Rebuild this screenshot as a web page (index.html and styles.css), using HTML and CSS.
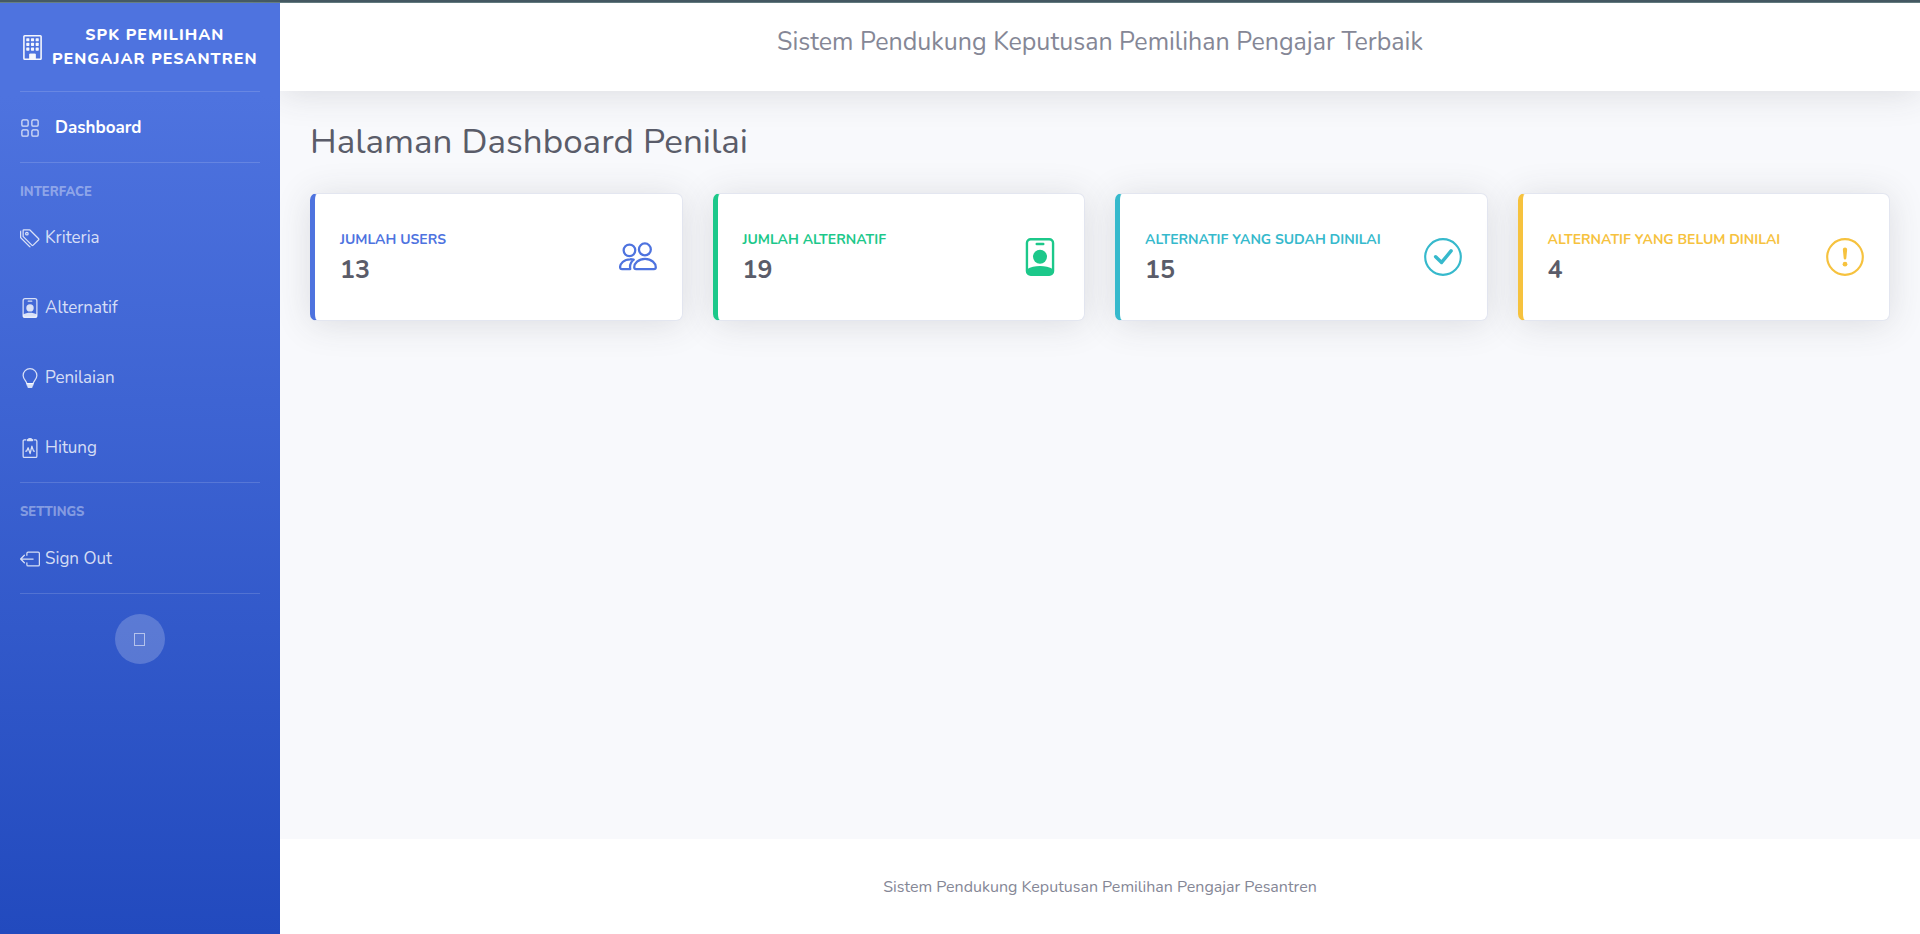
FILE: index.html
```
<!DOCTYPE html>
<html lang="id">
<head>
<meta charset="utf-8">
<title>Dashboard Penilai</title>
<link rel="stylesheet" href="styles.css">
</head>
<body>
<svg class="defs" width="0" height="0" aria-hidden="true">
  <symbol id="badge" viewBox="0 0 16 16">
    <rect x="2.5" y=".5" width="11" height="15" rx="1.6" fill="none" stroke="currentColor"/>
    <rect x="6.1" y="2" width="3.8" height="1" rx=".5"/>
    <circle cx="8" cy="7.9" r="2.95"/>
    <path d="M2.5 13.2C4 12.2 6 11.8 8 11.8s4 .4 5.5 1.4v.9a1.5 1.5 0 0 1-1.5 1.5H4a1.5 1.5 0 0 1-1.5-1.5z"/>
  </symbol>
</svg>
<div class="strip"></div>
<div class="app">
  <nav class="sidebar">
    <a class="brand">
      <svg class="brand-icon" viewBox="0 0 16 16" fill="currentColor"><path fill-rule="evenodd" d="M3 0h10a1 1 0 0 1 1 1v14a1 1 0 0 1-1 1H3a1 1 0 0 1-1-1V1a1 1 0 0 1 1-1zm0 1v14h3v-2.5a.5.5 0 0 1 .5-.5h3a.5.5 0 0 1 .5.5V15h3V1z"/><path d="M6 12h4v3.5H6z"/><g><rect x="4" y="2" width="2" height="2" rx=".4"/><rect x="7" y="2" width="2" height="2" rx=".4"/><rect x="10" y="2" width="2" height="2" rx=".4"/><rect x="4" y="5" width="2" height="2" rx=".4"/><rect x="7" y="5" width="2" height="2" rx=".4"/><rect x="10" y="5" width="2" height="2" rx=".4"/><rect x="4" y="8" width="2" height="2" rx=".4"/><rect x="7" y="8" width="2" height="2" rx=".4"/><rect x="10" y="8" width="2" height="2" rx=".4"/></g></svg>
      <span class="brand-text"><span>SPK PEMILIHAN</span><span>PENGAJAR PESANTREN</span></span>
    </a>
    <hr>
    <a class="nav-link active">
      <svg class="icon" viewBox="0 0 16 16" fill="none" stroke="currentColor"><rect x="1.5" y="1.5" width="5" height="5" rx="1"/><rect x="9.5" y="1.5" width="5" height="5" rx="1"/><rect x="1.5" y="9.5" width="5" height="5" rx="1"/><rect x="9.5" y="9.5" width="5" height="5" rx="1"/></svg>
      <span>Dashboard</span>
    </a>
    <hr>
    <div class="heading">INTERFACE</div>
    <a class="nav-link">
      <svg class="icon" viewBox="0 0 16 16" fill="currentColor"><path d="M3 2v4.586l7 7L14.586 9l-7-7H3zM2 2a1 1 0 0 1 1-1h4.586a1 1 0 0 1 .707.293l7 7a1 1 0 0 1 0 1.414l-4.586 4.586a1 1 0 0 1-1.414 0l-7-7A1 1 0 0 1 2 6.586V2z"/><path d="M5.5 5a.5.5 0 1 1 0-1 .5.5 0 0 1 0 1zm0 1a1.5 1.5 0 1 0 0-3 1.5 1.5 0 0 0 0 3zM1 7.086a1 1 0 0 0 .293.707L8.75 15.25l-.043.043a1 1 0 0 1-1.414 0l-7-7A1 1 0 0 1 0 7.586V3a1 1 0 0 1 1-1v5.086z"/></svg>
      <span>Kriteria</span>
    </a>
    <a class="nav-link">
      <svg class="icon" fill="currentColor"><use href="#badge"/></svg>
      <span>Alternatif</span>
    </a>
    <a class="nav-link">
      <svg class="icon" viewBox="0 0 16 16" fill="currentColor"><path fill="none" stroke="currentColor" d="M5.5 12.5C5.2 10.3 2.5 9 2.5 6a5.5 5.5 0 0 1 11 0c0 3-2.7 4.3-3 6.5z"/><path d="M5.2 12h5.6v1.5a.8.8 0 0 1-.5.7l-.3 1.2a.8.8 0 0 1-.8.6H6.800a.8.8 0 0 1-.8-.6l-.3-1.2a.8.8 0 0 1-.5-.7z"/></svg>
      <span>Penilaian</span>
    </a>
    <a class="nav-link">
      <svg class="icon" viewBox="0 0 16 16" fill="none" stroke="currentColor"><path d="M5 1.5H3.500a1 1 0 0 0-1 1v12a1 1 0 0 0 1 1h9a1 1 0 0 0 1-1v-12a1 1 0 0 0-1-1H11"/><path fill="currentColor" stroke="none" d="M5.500 1.100Q5.500.9 6.200.7 6.800 0 7.500 0h1q.7 0 1.300.7.700.2.700.4V2a.5.5 0 0 1-.5.5H6a.5.5 0 0 1-.5-.5z"/><path stroke-linecap="round" stroke-linejoin="round" d="M4.600 10.500h.7l1.200-2.700 1.600 4.700L9.500 6.500l1.300 4h.7"/></svg>
      <span>Hitung</span>
    </a>
    <hr>
    <div class="heading">SETTINGS</div>
    <a class="nav-link signout">
      <svg class="icon" viewBox="0 0 16 16" fill="none" stroke="currentColor" stroke-linecap="round" stroke-linejoin="round"><path d="M5.500 5V3.500a1 1 0 0 1 1-1h8a1 1 0 0 1 1 1v9a1 1 0 0 1-1 1h-8a1 1 0 0 1-1-1V11M3.500 5l-3 3 3 3M.5 8h10"/></svg>
      <span>Sign Out</span>
    </a>
    <hr>
    <button class="toggle" type="button" aria-label="Toggle sidebar"><span class="glyph"></span></button>
  </nav>
  <div class="content">
    <header class="topbar">Sistem Pendukung Keputusan Pemilihan Pengajar Terbaik</header>
    <main>
      <h1>Halaman Dashboard Penilai</h1>
      <div class="cards">
        <section class="card primary">
          <div class="stat"><div class="label">JUMLAH USERS</div><div class="value">13</div></div>
          <svg class="card-icon" viewBox="0 0 16 16" fill="none" stroke="currentColor" stroke-width=".95" stroke-linejoin="round"><circle cx="4.400" cy="5.200" r="2.450"/><circle cx="10.900" cy="4.800" r="2.500"/><path d="M7.200 13.100h7.500c.6 0 .8-.3.800-.8 0-1.500-1.700-3.500-4.550-3.500S6.400 10.800 6.400 12.300c0 .5.200.8.800.8zM6.200 9.100a6 6 0 0 0-1.500-.15C2 8.950.45 10.900.45 12.300c0 .5.200.8.800.8h3.500c-.3-1.500.2-3 1.450-4z"/></svg>
        </section>
        <section class="card success">
          <div class="stat"><div class="label">JUMLAH ALTERNATIF</div><div class="value">19</div></div>
          <svg class="card-icon" fill="currentColor"><use href="#badge"/></svg>
        </section>
        <section class="card info">
          <div class="stat"><div class="label">ALTERNATIF YANG SUDAH DINILAI</div><div class="value">15</div></div>
          <svg class="card-icon" viewBox="0 0 16 16" fill="none" stroke="currentColor"><circle cx="8" cy="8" r="7.500" stroke-width=".9"/><path stroke-width="1.450" stroke-linecap="round" stroke-linejoin="round" d="M4.900 7.900l2.500 2.400 4-4.850"/></svg>
        </section>
        <section class="card warning">
          <div class="stat"><div class="label">ALTERNATIF YANG BELUM DINILAI</div><div class="value">4</div></div>
          <svg class="card-icon" viewBox="0 0 16 16" fill="currentColor"><circle cx="8" cy="8" r="7.500" fill="none" stroke="currentColor" stroke-width=".9"/><circle cx="8" cy="11" r="1"/><path d="M7.100 4.995a.905.905 0 1 1 1.800 0l-.35 3.507a.552.552 0 0 1-1.100 0z"/></svg>
        </section>
      </div>
    </main>
    <footer>Sistem Pendukung Keputusan Pemilihan Pengajar Pesantren</footer>
  </div>
</div>
</body>
</html>
```
FILE: styles.css
```
* { box-sizing: border-box; }
body {
  margin: 0;
  height: 100vh;
  display: flex;
  flex-direction: column;
  overflow: hidden;
  font: 16px/24px Nunito, "Open Sans", "Noto Sans", sans-serif;
  color: #858796;
  background: #f8f9fc;
}
svg { display: block; flex: none; }
.defs { position: absolute; }
.strip { height: 3px; flex: none; background: #455a64; border-bottom: 1px solid #667f83; }
.app { flex: 1; display: flex; min-height: 0; }

.sidebar {
  width: 280px;
  flex: none;
  position: relative;
  z-index: 1;
  color: #fff;
  background: linear-gradient(180deg, #4e73df 10%, #224abe 100%);
}
.sidebar hr { height: 1px; border: 0; margin: 0 20px; background: rgba(255, 255, 255, .15); }
.brand { height: 88px; padding-left: 20px; display: flex; align-items: center; gap: 7px; font-weight: 800; letter-spacing: 1px; }
.brand-icon { width: 25px; height: 25px; margin-top: 1px; opacity: .95; }
.brand-text { display: flex; flex-direction: column; align-items: center; }
.nav-link { height: 70px; padding: 2px 0 0 20px; display: flex; align-items: center; gap: 5px; font-size: 17px; color: rgba(255, 255, 255, .8); }
.icon { width: 20px; height: 20px; }
.nav-link.active { gap: 15px; font-weight: 700; }
.active span { color: #fff; }
.signout { height: 71px; }
.heading { margin: 21px 20px 1px; height: 17px; font-size: 13px; line-height: 17px; font-weight: 800; color: rgba(255, 255, 255, .4); }
.toggle { width: 50px; height: 50px; margin: 20px auto 0; padding: 0 1px 0 0; border: 0; border-radius: 50%; display: flex; align-items: center; justify-content: center; background: rgba(255, 255, 255, .2); }
.glyph { width: 11px; height: 13px; border: 1px solid rgba(255, 255, 255, .55); }

.content { flex: 1; min-width: 0; display: flex; flex-direction: column; }
.topbar { height: 88px; flex: none; background: #fff; box-shadow: 0 3px 35px rgba(58, 59, 69, .15); text-align: center; font-size: 25px; line-height: 78px; }
main { flex: 1; padding: 31px 30px 0; }
h1 { margin: 0 0 31px; font-size: 35px; line-height: 40px; font-weight: 400; color: #5a5c69; }
.cards { display: grid; grid-template-columns: repeat(4, 1fr); gap: 30px; }
.card {
  height: 127.5px;
  padding: 0 25px;
  display: flex;
  align-items: center;
  justify-content: space-between;
  background: #fff;
  border: 1px solid #e3e6f0;
  border-left: 5px solid;
  border-radius: 7px;
  box-shadow: 0 3px 35px rgba(58, 59, 69, .15);
}
.primary { color: #4e73df; border-left-color: #4e73df; }
.success { color: #1cc88a; border-left-color: #1cc88a; }
.info { color: #36b9cc; border-left-color: #36b9cc; }
.warning { color: #f6c23e; border-left-color: #f6c23e; }
.stat { padding-top: 2px; }
.label { font-size: 14px; line-height: 20px; font-weight: 700; }
.value { margin-top: 5px; font-size: 25px; line-height: 30px; font-weight: 700; color: #5a5c69; }
.card-icon { width: 38px; height: 38px; }

footer { height: 95px; flex: none; padding-top: 2px; background: #fff; text-align: center; line-height: 93px; }
```
